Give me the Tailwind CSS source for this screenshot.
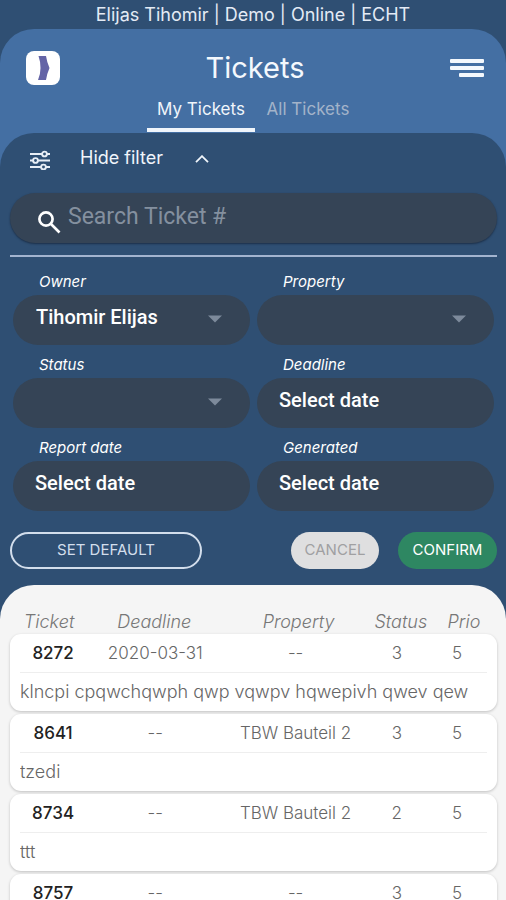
<!DOCTYPE html>
<html lang="en">
<head>
<meta charset="utf-8">
<meta name="viewport" content="width=device-width, initial-scale=1">
<title>Tickets</title>
<script src="https://cdn.jsdelivr.net/npm/@tailwindcss/browser@4"></script>
</head>
<body class="bg-[#2f4f73] font-['Inter',sans-serif] text-white">
<div class="flex h-dvh flex-col overflow-hidden">
  <p class="h-[29px] shrink-0 text-center text-[18px] leading-[29px] text-[#e4ebf5]">Elijas Tihomir | Demo | Online | ECHT</p>

  <div class="flex min-h-0 flex-1 flex-col rounded-t-[34px] bg-[#446fa3]">
    <header class="shrink-0">
      <div class="grid grid-cols-[1fr_auto_1fr] items-center pt-4 pr-[22px] pl-[26px]">
        <svg class="size-[34px]" viewBox="0 0 34 34" role="img" aria-label="Logo">
          <rect width="34" height="34" rx="8" fill="#fff"/>
          <path d="M12.500 5h7.500q1 6.500 3.500 12-2.500 5.500-3.500 12h-8q2.500-5.500 2.500-12t-2-12z" fill="#6464a6"/>
        </svg>
        <h1 class="text-[29px] leading-[46px] text-[#f4f8fd]">Tickets</h1>
        <button type="button" aria-label="Menu" class="justify-self-end">
          <svg class="h-5 w-[34px]" viewBox="0 0 34 20" fill="#f4f8fd">
            <rect y="1" width="34" height="4" rx="1"/><rect y="8" width="34" height="4" rx="1"/><rect x="9" y="15" width="25" height="4" rx="1"/>
          </svg>
        </button>
      </div>
      <nav class="flex h-[42px] justify-center pl-[2px]">
        <a href="#my" aria-current="page" class="h-[41px] w-[108px] border-b-[4px] text-center text-[17px] leading-9 text-[#f0f5fb]">My Tickets</a>
        <a href="#all" class="w-[106px] text-center text-[17px] leading-9 text-[#a3b3c9]">All Tickets</a>
      </nav>
    </header>

    <main class="flex min-h-0 flex-1 flex-col rounded-t-[34px] bg-[#2f4f73]">
      <form class="shrink-0 pr-[9px] pb-4 pl-[10px]">
        <button type="button" aria-expanded="true" class="flex h-12 items-center pl-5 text-[18px]">
          <svg class="mt-[6px] h-5 w-5" viewBox="0 0 20 20" fill="none" stroke="#e8eef6" stroke-width="1.900">
            <path d="M0 4h12M17 4h3M0 10.500h3M8 10.500h12M0 17h11M16 17h4"/>
            <circle cx="14.500" cy="4" r="2.400"/><circle cx="5.500" cy="10.500" r="2.400"/><circle cx="13.500" cy="17" r="2.400"/>
          </svg>
          <span class="ml-[30px] w-[115px] text-left text-[#f0f5fb]">Hide filter</span>
          <svg class="mt-1 h-2 w-[14px]" viewBox="0 0 14 8" fill="none" stroke="#f0f5fb" stroke-width="1.800"><path d="M1 7.200 7 1.200l6 6"/></svg>
        </button>

        <div class="mt-3 flex h-[50px] items-center rounded-full bg-[#354456] pl-7 shadow-[0_1px_2px_#1c2f48]">
          <svg class="mt-2 size-[23px] shrink-0" viewBox="0 0 23 23" fill="none" stroke="#fff" stroke-width="2.700"><circle cx="8" cy="8" r="6.600"/><path d="m13 13 8.500 8.500"/></svg>
          <input type="search" aria-label="Search Ticket #" placeholder="Search Ticket #" class="ml-[7px] min-w-0 flex-1 bg-transparent pb-[2px] font-['Roboto',sans-serif] text-[23px] outline-none placeholder:text-[#84909f]">
        </div>
        <hr class="mt-3 border-t-2 border-[#a3b4cf]">

        <div class="mt-[14px] grid grid-cols-2 gap-x-[7px] gap-y-[9px] px-[3px] font-['Roboto',sans-serif] text-[20px] font-medium">
          <div>
            <label for="owner" class="block h-6 pl-[26px] font-['Inter',sans-serif] text-[15px] leading-[22px] font-normal italic">Owner</label>
            <div class="relative">
              <select id="owner" class="h-[50px] w-full appearance-none rounded-full bg-[#354456] pb-[6px] pl-[23px]"><option>Tihomir Elijas</option></select>
              <svg class="pointer-events-none absolute top-5 right-7 h-[8px] w-[14px]" viewBox="0 0 14 8" fill="#7d8a9b"><path d="M0 .5h14L7 7.500z"/></svg>
            </div>
          </div>
          <div>
            <label for="property" class="block h-6 pl-[26px] font-['Inter',sans-serif] text-[15px] leading-[22px] font-normal italic">Property</label>
            <div class="relative">
              <select id="property" class="h-[50px] w-full appearance-none rounded-full bg-[#354456] pb-[6px] pl-[23px]"><option></option></select>
              <svg class="pointer-events-none absolute top-5 right-7 h-[8px] w-[14px]" viewBox="0 0 14 8" fill="#7d8a9b"><path d="M0 .5h14L7 7.500z"/></svg>
            </div>
          </div>
          <div>
            <label for="status" class="block h-6 pl-[26px] font-['Inter',sans-serif] text-[15px] leading-[22px] font-normal italic">Status</label>
            <div class="relative">
              <select id="status" class="h-[50px] w-full appearance-none rounded-full bg-[#354456] pb-[6px] pl-[23px]"><option></option></select>
              <svg class="pointer-events-none absolute top-5 right-7 h-[8px] w-[14px]" viewBox="0 0 14 8" fill="#7d8a9b"><path d="M0 .5h14L7 7.500z"/></svg>
            </div>
          </div>
          <div>
            <label for="deadline" class="block h-6 pl-[26px] font-['Inter',sans-serif] text-[15px] leading-[22px] font-normal italic">Deadline</label>
            <button type="button" id="deadline" class="block h-[50px] w-full rounded-full bg-[#354456] pb-[6px] pl-[22px] text-left">Select date</button>
          </div>
          <div>
            <label for="report" class="block h-6 pl-[26px] font-['Inter',sans-serif] text-[15px] leading-[22px] font-normal italic">Report date</label>
            <button type="button" id="report" class="block h-[50px] w-full rounded-full bg-[#354456] pb-[6px] pl-[22px] text-left">Select date</button>
          </div>
          <div>
            <label for="generated" class="block h-6 pl-[26px] font-['Inter',sans-serif] text-[15px] leading-[22px] font-normal italic">Generated</label>
            <button type="button" id="generated" class="block h-[50px] w-full rounded-full bg-[#354456] pb-[6px] pl-[22px] text-left">Select date</button>
          </div>
        </div>

        <div class="mt-[21px] flex h-[37px] text-[15px]">
          <button type="button" class="w-48 rounded-full border-2 border-[#d3deec] text-[#d3deec]">SET DEFAULT</button>
          <button type="button" class="ml-auto w-[88px] rounded-full bg-[#dfdfe0] text-[#a0a0a2]">CANCEL</button>
          <button type="submit" class="ml-[19px] w-[99px] rounded-full bg-[#2e8762]">CONFIRM</button>
        </div>
      </form>

      <section class="min-h-0 flex-1 overflow-y-auto rounded-t-[34px] bg-[#f5f5f5] pt-6 pr-[9px] pl-[10px] [scrollbar-width:none]">
        <table class="block text-[18px] font-light text-[#666]">
          <thead class="block">
            <tr class="grid h-[25px] grid-cols-[66fr_144fr_144fr_60fr_66fr] pl-[6px] leading-[25px] italic text-[#777] *:font-light">
              <th scope="col">Ticket</th><th scope="col">Deadline</th><th scope="col">Property</th><th scope="col">Status</th><th scope="col">Prio</th>
            </tr>
          </thead>
          <tbody class="mb-[3px] block rounded-[11px] bg-white px-[10px] shadow-[0_1px_3px_#00000038]">
            <tr class="grid h-[39px] grid-cols-[66fr_138fr_142fr_60fr_60fr] border-b border-[#eee] text-center text-[17px] leading-[38px]">
              <th scope="row" class="font-medium text-[#222]">8272</th><td>2020-03-31</td><td>--</td><td>3</td><td>5</td>
            </tr>
            <tr class="block h-[38px] leading-[38px]"><td colspan="5" class="block truncate">klncpi cpqwchqwph qwp vqwpv hqwepivh qwev qew</td></tr>
          </tbody>
          <tbody class="mb-[3px] block rounded-[11px] bg-white px-[10px] shadow-[0_1px_3px_#00000038]">
            <tr class="grid h-[39px] grid-cols-[66fr_138fr_142fr_60fr_60fr] border-b border-[#eee] text-center text-[17px] leading-[38px]">
              <th scope="row" class="font-medium text-[#222]">8641</th><td>--</td><td>TBW Bauteil 2</td><td>3</td><td>5</td>
            </tr>
            <tr class="block h-[38px] leading-[38px]"><td colspan="5" class="block truncate">tzedi</td></tr>
          </tbody>
          <tbody class="mb-[3px] block rounded-[11px] bg-white px-[10px] shadow-[0_1px_3px_#00000038]">
            <tr class="grid h-[39px] grid-cols-[66fr_138fr_142fr_60fr_60fr] border-b border-[#eee] text-center text-[17px] leading-[38px]">
              <th scope="row" class="font-medium text-[#222]">8734</th><td>--</td><td>TBW Bauteil 2</td><td>2</td><td>5</td>
            </tr>
            <tr class="block h-[38px] leading-[38px]"><td colspan="5" class="block truncate">ttt</td></tr>
          </tbody>
          <tbody class="block rounded-[11px] bg-white px-[10px] shadow-[0_1px_3px_#00000038]">
            <tr class="grid h-[39px] grid-cols-[66fr_138fr_142fr_60fr_60fr] text-center text-[17px] leading-[38px]">
              <th scope="row" class="font-medium text-[#222]">8757</th><td>--</td><td>--</td><td>3</td><td>5</td>
            </tr>
          </tbody>
        </table>
      </section>
    </main>
  </div>
</div>
</body>
</html>
